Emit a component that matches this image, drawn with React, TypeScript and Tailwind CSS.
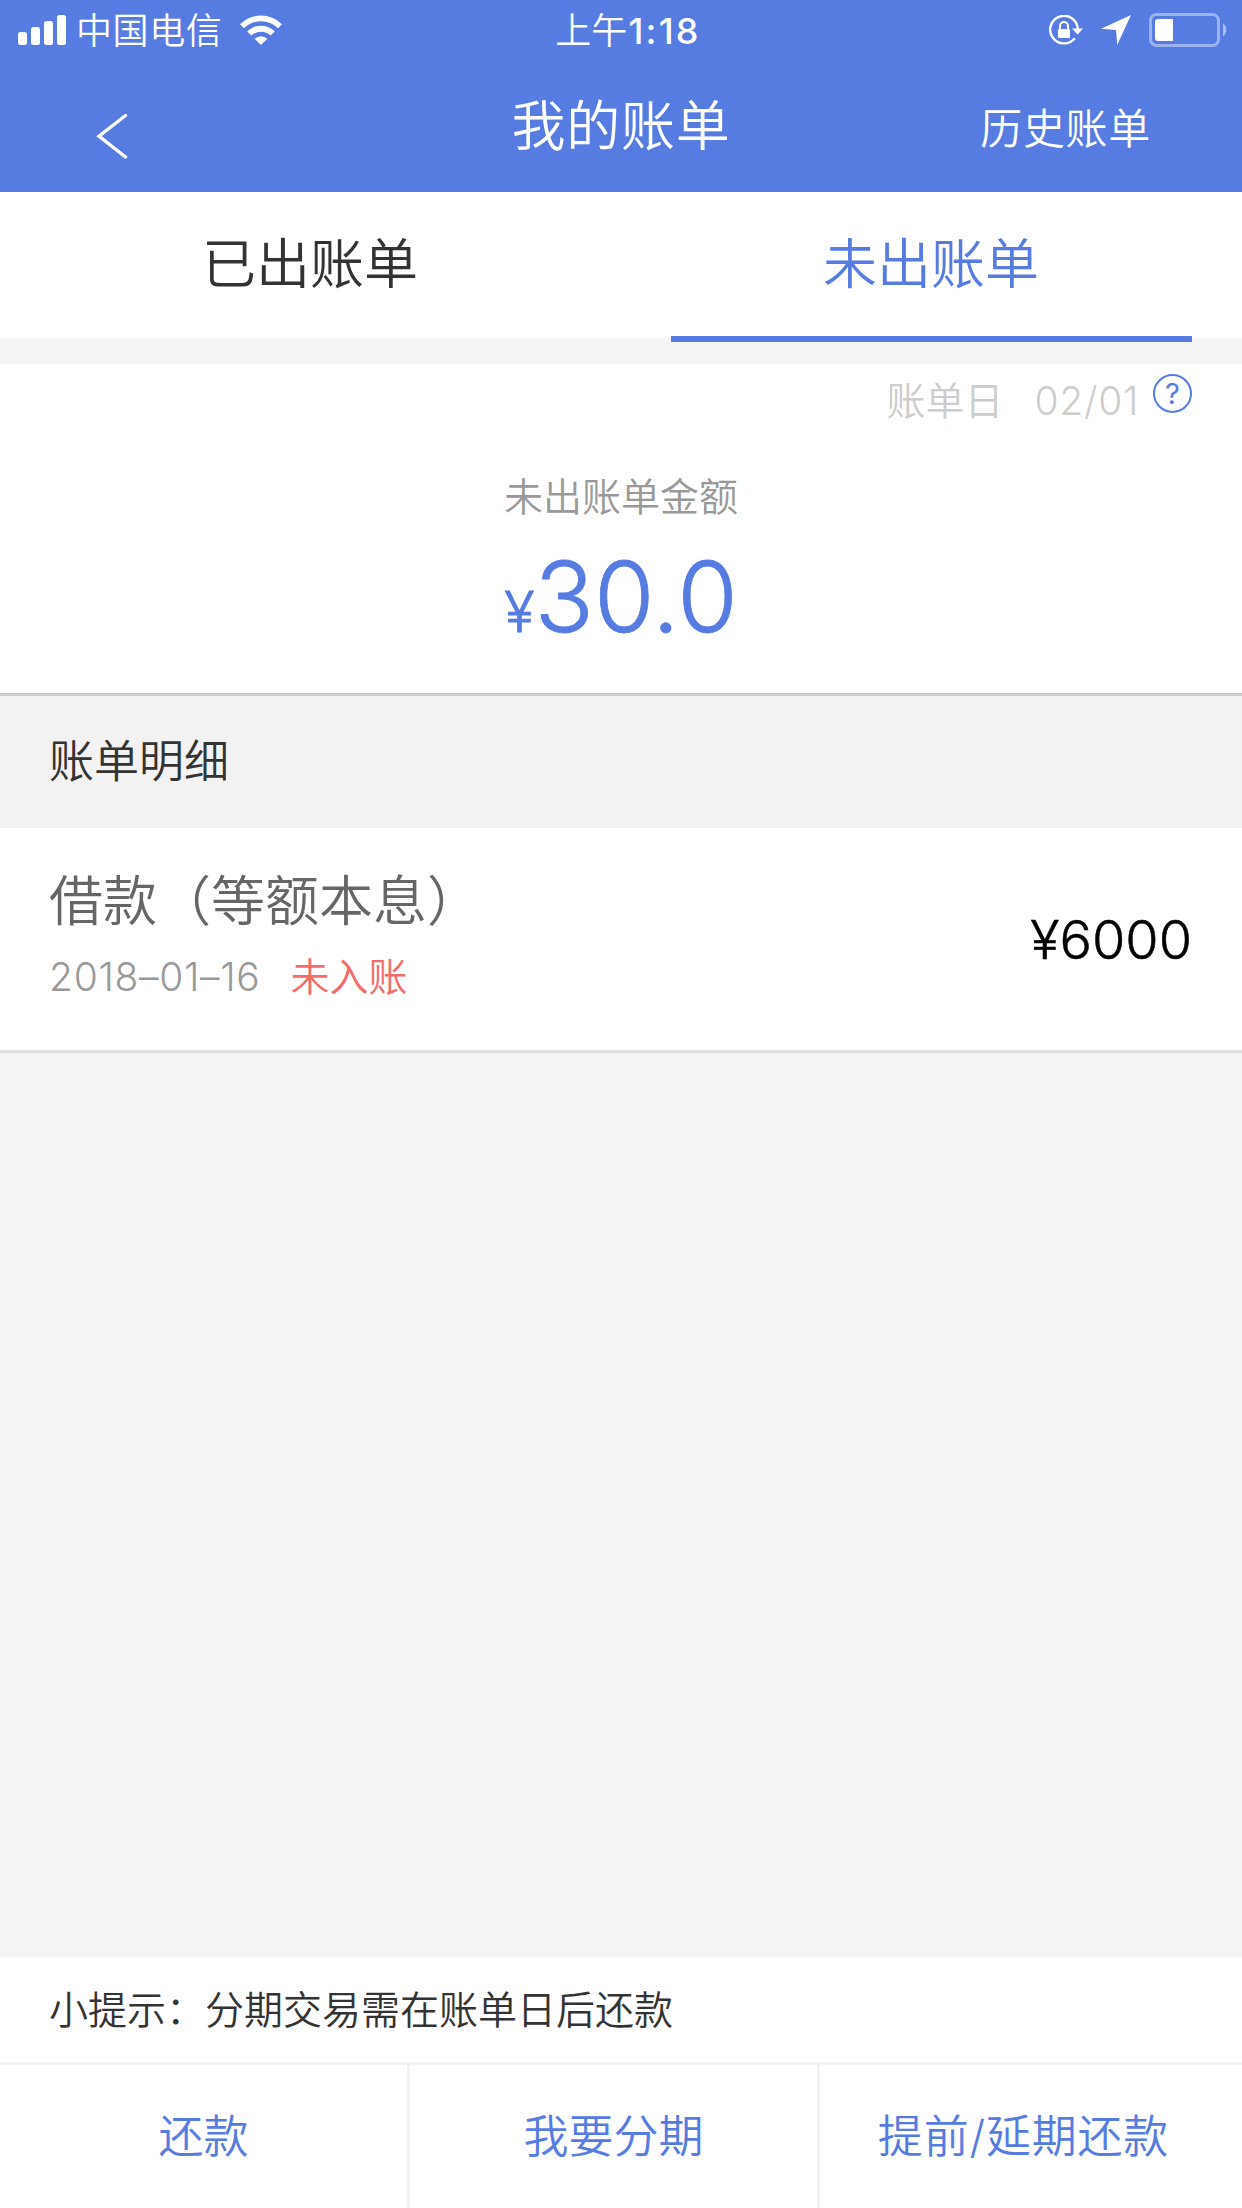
import { useState } from "react";
import clsx from "clsx";

interface Bill {
  id: number;
  title: string;
  date: string;
  status: string;
  amount: string;
}

const tabs = ["已出账单", "未出账单"];

const bills: Bill[] = [
  {
    id: 1,
    title: "借款（等额本息）",
    date: "2018–01–16",
    status: "未入账",
    amount: "¥6000",
  },
];

const actions = ["还款", "我要分期", "提前/延期还款"];

function SignalIcon() {
  return (
    <svg width="48" height="30" viewBox="0 0 48 30" fill="currentColor">
      <rect x="0" y="17" width="9" height="13" rx="2.5" />
      <rect x="13" y="12" width="9" height="18" rx="2.5" />
      <rect x="26" y="6" width="9" height="24" rx="2.5" />
      <rect x="39" y="0" width="9" height="30" rx="2.5" />
    </svg>
  );
}

function WifiIcon() {
  return (
    <svg width="42" height="30" viewBox="0 0 42 30" fill="currentColor">
      <path d="M0 9.2A30 30 0 0 1 42 9.2L38 13.2A24.2 24.2 0 0 0 4 13.2Z" />
      <path d="M7.2 16.4A19.6 19.6 0 0 1 34.8 16.4L30.6 20.6A13.7 13.7 0 0 0 11.4 20.6Z" />
      <path d="M14.6 23.8A9.2 9.2 0 0 1 27.4 23.8L21 30Z" />
    </svg>
  );
}

function RotationLockIcon() {
  return (
    <svg width="34" height="30" viewBox="0 0 34 30" fill="none">
      <path
        d="M25.8 23.2A13.8 13.8 0 1 1 28.8 14"
        stroke="currentColor"
        strokeWidth="2.4"
      />
      <path d="M23 13.6H34L28.6 19.6Z" fill="currentColor" />
      <rect x="9" y="14" width="12" height="9" rx="1" fill="currentColor" />
      <path
        d="M11 14.5V11A4 4 0 0 1 19 11V14.5"
        stroke="currentColor"
        strokeWidth="2"
      />
    </svg>
  );
}

function LocationIcon() {
  return (
    <svg width="30" height="30" viewBox="0 0 30 30" fill="currentColor">
      <path d="M30 0L16.2 30L15 15L0 13.8Z" />
    </svg>
  );
}

function BatteryIcon() {
  return (
    <svg width="78" height="34" viewBox="0 0 78 34" fill="none">
      <rect
        x="1.5"
        y="1.5"
        width="68"
        height="31"
        rx="6"
        stroke="currentColor"
        strokeOpacity="0.42"
        strokeWidth="3"
      />
      <path d="M9 6H24V28H9A3 3 0 0 1 6 25V9A3 3 0 0 1 9 6Z" fill="currentColor" />
      <path
        d="M74 10.5A8 8 0 0 1 74 23.5Z"
        fill="currentColor"
        fillOpacity="0.5"
      />
    </svg>
  );
}

function StatusBar() {
  return (
    <div className="grid h-[60px] grid-cols-3 items-center pr-[15px] pl-[18px]">
      <div className="flex items-center">
        <SignalIcon />
        <span className="ml-[10px] pt-[2px] text-[36px] leading-[58px] tracking-[0.6px]">
          中国电信
        </span>
        <span className="ml-[18px]">
          <WifiIcon />
        </span>
      </div>
      <div className="flex justify-center pt-[2px] pl-[11px] text-[36px] leading-[58px]">
        <span>上午</span>
        <span className="ml-[1px] font-medium tracking-[2.2px]">1:18</span>
      </div>
      <div className="flex items-center justify-end">
        <RotationLockIcon />
        <span className="ml-[18px]">
          <LocationIcon />
        </span>
        <span className="ml-[18px]">
          <BatteryIcon />
        </span>
      </div>
    </div>
  );
}

function NavBar() {
  return (
    <div className="grid h-[132px] grid-cols-3 items-center">
      <button className="flex pt-[19px] pl-[96px]">
        <svg width="32" height="46" viewBox="0 0 32 46" fill="none">
          <path
            d="M29.5 2.5L3 23.2L29.5 44"
            stroke="currentColor"
            strokeWidth="3.4"
            strokeLinecap="round"
          />
        </svg>
      </button>
      <h1 className="pt-[2px] text-center text-[54px] leading-[130px] font-[350] tracking-[0.8px]">
        我的账单
      </h1>
      <button className="pt-[5px] pr-[91px] text-right text-[42px] leading-[127px] font-[350] tracking-[0.7px]">
        历史账单
      </button>
    </div>
  );
}

export default function App() {
  const [activeTab, setActiveTab] = useState(1);

  return (
    <div className="flex h-[2208px] w-[1242px] flex-col overflow-hidden bg-[#f4f4f4] font-['Inter','Noto_Sans_CJK_SC',sans-serif] font-[350] text-[#333]">
      <header className="h-[192px] shrink-0 bg-[#567ce1] text-white">
        <StatusBar />
        <NavBar />
      </header>

      {/* The active underline hangs over the gap below the tabs */}
      <nav className="mb-[26px] grid h-[146px] shrink-0 grid-cols-2 bg-white">
        {tabs.map((tab, index) => (
          <button
            key={tab}
            onClick={() => setActiveTab(index)}
            className={clsx(
              "relative pr-[1px] text-[54px] leading-[146px] font-[350]",
              index === activeTab && "text-[#567ce1]"
            )}
          >
            {tab}
            {index === activeTab && (
              <span className="absolute right-[50px] -bottom-1 left-[50px] h-[6px] bg-[#567ce1]" />
            )}
          </button>
        ))}
      </nav>

      <section className="flex h-[332px] shrink-0 flex-col border-b-[3px] border-[#ccc] bg-white">
        <div className="flex justify-end pt-[10px] pr-[50px] text-[39px] leading-[54px] text-[#ccc]">
          <span>账单日</span>
          <span className="ml-[31px] tracking-[0.7px]">02/01</span>
          <span className="ml-[14px] flex size-[39px] items-center justify-center rounded-full border-2 border-[#567ce1] text-[29px] leading-none font-normal text-[#567ce1]">
            ?
          </span>
        </div>
        <p className="mt-[42px] text-center text-[39px] leading-[54px] text-[#999]">
          未出账单金额
        </p>
        <p className="mt-[15px] text-center leading-[116px] text-[#567ce1] [-webkit-text-stroke:0.8px_currentColor]">
          <span className="text-[56px]">¥</span>
          <span className="text-[98px]">30.0</span>
        </p>
      </section>

      <h2 className="h-[132px] shrink-0 bg-[#f2f2f2] pl-[49px] text-[45px] leading-[132px]">
        账单明细
      </h2>

      <ul>
        {bills.map((bill) => (
          <li
            key={bill.id}
            className="flex h-[225px] items-center justify-between border-b-[3px] border-[#e0e0e0] bg-white pr-[50px] pl-[49px]"
          >
            <div>
              <p className="text-[54px] leading-[80px] text-[#666]">
                {bill.title}
              </p>
              <p className="pb-1 text-[39px] leading-[70px]">
                <span className="tracking-[0.7px] text-[#999]">
                  {bill.date}
                </span>
                <span className="ml-[30px] text-[#f56c6a]">{bill.status}</span>
              </p>
            </div>
            <span className="text-[54px] text-black [-webkit-text-stroke:0.5px_currentColor]">
              {bill.amount}
            </span>
          </li>
        ))}
      </ul>

      <footer className="mt-auto shrink-0 bg-white">
        <p className="h-[105px] pl-[49px] text-[39px] leading-[105px]">
          小提示：分期交易需在账单日后还款
        </p>
        <div className="flex h-[146px] border-t-[3px] border-[#f2f2f2]">
          {actions.map((action) => (
            <button
              key={action}
              className="w-[410px] border-r-[3px] border-[#f2f2f2] pt-[1px] text-[45px] leading-[142px] font-[350] text-[#567ce1] last:border-transparent last:tracking-[0.8px]"
            >
              {action}
            </button>
          ))}
        </div>
      </footer>
    </div>
  );
}
